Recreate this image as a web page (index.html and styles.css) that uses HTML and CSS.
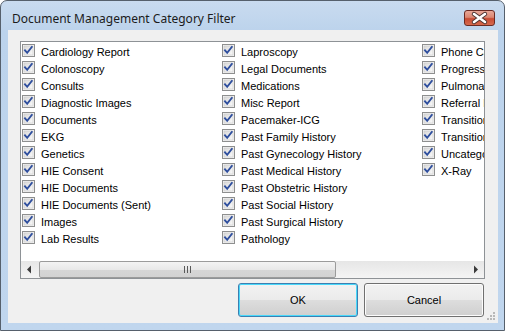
FILE: index.html
```html
<!DOCTYPE html>
<html>
<head>
<meta charset="utf-8">
<link rel="stylesheet" href="styles.css">
</head>
<body>
<svg class="defs" width="0" height="0">
  <defs>
    <linearGradient id="cbfill" x1="0" y1="0" x2="1" y2="1">
      <stop offset="0" stop-color="#d9d9d9"/>
      <stop offset="1" stop-color="#fafafa"/>
    </linearGradient>
    <symbol id="chk" viewBox="0 0 13 13">
      <rect x="0.5" y="0.5" width="12" height="12" fill="#f4f4f4" stroke="#8e8f8f"/>
      <rect x="2" y="2" width="9" height="9" fill="url(#cbfill)" stroke="#c8c8c8" stroke-width="0.6"/>
      <path d="M3 6.3 L5.2 8.8 L9.8 3" fill="none" stroke="#2f4f9e" stroke-width="1.9" stroke-linecap="square"/>
    </symbol>
  </defs>
</svg>
<div class="window">
  <div class="titlebar">
    <span class="title">Document Management Category Filter</span>
    <div class="close">
      <svg width="31" height="16" viewBox="0 0 31 16">
        <path d="M10 4 L21 12 M21 4 L10 12" stroke="#4d3330" stroke-width="4.4" stroke-linecap="round"/>
        <path d="M10 4 L21 12 M21 4 L10 12" stroke="#ffffff" stroke-width="2.6" stroke-linecap="round"/>
      </svg>
    </div>
  </div>
  <div class="client">
    <div class="listbox">
      <div class="items">
        <div class="item"><svg class="cb"><use href="#chk"/></svg><span>Cardiology Report</span></div>
        <div class="item"><svg class="cb"><use href="#chk"/></svg><span>Colonoscopy</span></div>
        <div class="item"><svg class="cb"><use href="#chk"/></svg><span>Consults</span></div>
        <div class="item"><svg class="cb"><use href="#chk"/></svg><span>Diagnostic Images</span></div>
        <div class="item"><svg class="cb"><use href="#chk"/></svg><span>Documents</span></div>
        <div class="item"><svg class="cb"><use href="#chk"/></svg><span>EKG</span></div>
        <div class="item"><svg class="cb"><use href="#chk"/></svg><span>Genetics</span></div>
        <div class="item"><svg class="cb"><use href="#chk"/></svg><span>HIE Consent</span></div>
        <div class="item"><svg class="cb"><use href="#chk"/></svg><span>HIE Documents</span></div>
        <div class="item"><svg class="cb"><use href="#chk"/></svg><span>HIE Documents (Sent)</span></div>
        <div class="item"><svg class="cb"><use href="#chk"/></svg><span>Images</span></div>
        <div class="item"><svg class="cb"><use href="#chk"/></svg><span>Lab Results</span></div>
        <div class="item"><svg class="cb"><use href="#chk"/></svg><span>Laproscopy</span></div>
        <div class="item"><svg class="cb"><use href="#chk"/></svg><span>Legal Documents</span></div>
        <div class="item"><svg class="cb"><use href="#chk"/></svg><span>Medications</span></div>
        <div class="item"><svg class="cb"><use href="#chk"/></svg><span>Misc Report</span></div>
        <div class="item"><svg class="cb"><use href="#chk"/></svg><span>Pacemaker-ICG</span></div>
        <div class="item"><svg class="cb"><use href="#chk"/></svg><span>Past Family History</span></div>
        <div class="item"><svg class="cb"><use href="#chk"/></svg><span>Past Gynecology History</span></div>
        <div class="item"><svg class="cb"><use href="#chk"/></svg><span>Past Medical History</span></div>
        <div class="item"><svg class="cb"><use href="#chk"/></svg><span>Past Obstetric History</span></div>
        <div class="item"><svg class="cb"><use href="#chk"/></svg><span>Past Social History</span></div>
        <div class="item"><svg class="cb"><use href="#chk"/></svg><span>Past Surgical History</span></div>
        <div class="item"><svg class="cb"><use href="#chk"/></svg><span>Pathology</span></div>
        <div class="item"><svg class="cb"><use href="#chk"/></svg><span>Phone Calls</span></div>
        <div class="item"><svg class="cb"><use href="#chk"/></svg><span>Progress Notes</span></div>
        <div class="item"><svg class="cb"><use href="#chk"/></svg><span>Pulmonary Function</span></div>
        <div class="item"><svg class="cb"><use href="#chk"/></svg><span>Referral Letters</span></div>
        <div class="item"><svg class="cb"><use href="#chk"/></svg><span>Transition of Care</span></div>
        <div class="item"><svg class="cb"><use href="#chk"/></svg><span>Transition of Care (Sent)</span></div>
        <div class="item"><svg class="cb"><use href="#chk"/></svg><span>Uncategorized</span></div>
        <div class="item"><svg class="cb"><use href="#chk"/></svg><span>X-Ray</span></div>
      </div>
      <div class="hscroll">
        <div class="arrow">
          <svg width="17" height="17" viewBox="0 0 17 17"><path d="M6 8.5 L10 4.5 L10 12.5 Z" fill="#3a3a3a"/></svg>
        </div>
        <div class="track">
          <div class="thumb">
            <svg width="8" height="7" viewBox="0 0 8 7"><path d="M0.5 0 V7 M3.5 0 V7 M6.5 0 V7" stroke="#5a5a5a" stroke-width="1"/></svg>
          </div>
        </div>
        <div class="arrow">
          <svg width="17" height="17" viewBox="0 0 17 17"><path d="M11 8.5 L7 4.5 L7 12.5 Z" fill="#3a3a3a"/></svg>
        </div>
      </div>
    </div>
    <div class="buttons">
      <div class="btn default">OK</div>
      <div class="btn">Cancel</div>
    </div>
    <svg class="grip" width="10" height="10" viewBox="0 0 10 10">
      <g fill="#b8b8b8">
        <rect x="7" y="1" width="2" height="2"/>
        <rect x="4" y="4" width="2" height="2"/><rect x="7" y="4" width="2" height="2"/>
        <rect x="1" y="7" width="2" height="2"/><rect x="4" y="7" width="2" height="2"/><rect x="7" y="7" width="2" height="2"/>
      </g>
    </svg>
  </div>
</div>
</body>
</html>
```

FILE: styles.css
```css
html, body {
  margin: 0;
  padding: 0;
  background: #ffffff;
}
.defs {
  position: absolute;
  width: 0;
  height: 0;
}
.window {
  width: 505px;
  height: 331px;
  box-sizing: border-box;
  border: 1px solid #56606c;
  border-radius: 7px 7px 0 0;
  background: linear-gradient(to bottom, #c9dbef 0px, #bcd3ec 30px, #c0d6ee 100%);
  padding: 0 6px 7px 7px;
  display: flex;
  flex-direction: column;
  overflow: hidden;
}
.titlebar {
  height: 29px;
  display: flex;
  align-items: flex-start;
  justify-content: space-between;
  flex: none;
}
.title {
  font-family: "Noto Sans", sans-serif;
  font-size: 12px;
  color: #1b1b1b;
  padding: 10px 0 0 4px;
  line-height: 16px;
}
.close {
  margin-top: 9px;
  margin-right: 3px;
  width: 31px;
  height: 16px;
  box-sizing: border-box;
  border: 1px solid #6b2a22;
  border-radius: 3px;
  background: linear-gradient(to bottom, #e9a898 0%, #db8672 45%, #c84b33 55%, #d66a4e 100%);
  position: relative;
}
.close svg {
  position: absolute;
  left: -1px;
  top: -1px;
}
.client {
  flex: 1;
  background: #f0f0f0;
  padding: 11px 13px 6px 12px;
  display: flex;
  flex-direction: column;
  position: relative;
}
.listbox {
  height: 238px;
  box-sizing: border-box;
  border: 1px solid #8e9296;
  background: #ffffff;
  display: flex;
  flex-direction: column;
  overflow: hidden;
}
.items {
  flex: 1;
  display: grid;
  grid-auto-flow: column;
  grid-template-rows: repeat(12, 17px);
  grid-auto-columns: 200px;
  overflow: hidden;
}
.item {
  display: flex;
  align-items: center;
  height: 17px;
  font-family: "Liberation Sans", Arial, sans-serif;
  font-size: 11px;
  color: #000000;
  white-space: nowrap;
}
.item span {
  padding-top: 2px;
}
.cb {
  width: 13px;
  height: 13px;
  margin-left: 1px;
  margin-right: 6px;
  flex: none;
}
.hscroll {
  height: 17px;
  display: flex;
  flex: none;
  background: linear-gradient(to bottom, #e6e6e6, #f4f4f4);
}
.arrow {
  width: 17px;
  height: 17px;
  flex: none;
}
.track {
  flex: 1;
  display: flex;
  padding: 0 1px;
}
.thumb {
  width: 297px;
  box-sizing: border-box;
  height: 17px;
  border: 1px solid #9b9b9b;
  border-radius: 2px;
  background: linear-gradient(to bottom, #f3f3f3 0%, #e8e8e8 50%, #d6d6d6 51%, #d2d2d2 100%);
  display: flex;
  align-items: center;
  justify-content: center;
}
.buttons {
  display: flex;
  justify-content: flex-end;
  gap: 6px;
  margin-top: 4px;
  padding-right: 1px;
}
.btn {
  width: 120px;
  height: 34px;
  box-sizing: border-box;
  border: 1px solid #707070;
  border-radius: 3px;
  background: linear-gradient(to bottom, #f2f2f2 0%, #ebebeb 50%, #dddddd 51%, #cfcfcf 100%);
  font-family: "Liberation Sans", Arial, sans-serif;
  font-size: 11px;
  color: #000000;
  display: flex;
  align-items: center;
  justify-content: center;
  box-shadow: inset 0 0 0 1px #fcfcfc;
}
.btn.default {
  border-color: #3c7fb1;
  box-shadow: inset 0 0 0 1px #48d8fa;
}
.grip {
  position: absolute;
  right: 2px;
  bottom: 2px;
}
```
